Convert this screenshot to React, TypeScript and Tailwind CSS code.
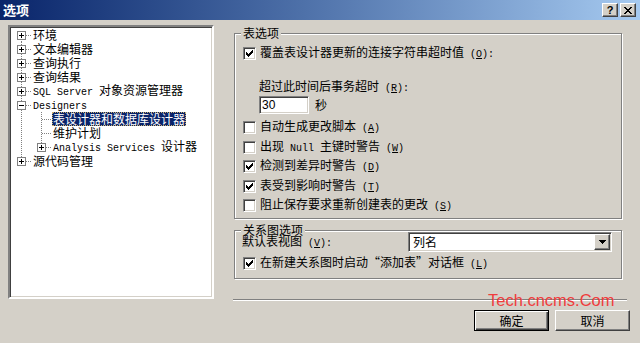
import React from "react";

const MONO = "font-['Liberation_Mono',monospace] text-[10px] whitespace-pre";

function M({ t }: { t: string }) {
  const parts = t.split(/([\x20-\x7E]+)/);
  return (
    <>
      {parts.map((p, i) =>
        p === "" ? null : /^[\x20-\x7E]+$/.test(p) ? (
          <span key={i} className={MONO}>
            {p}
          </span>
        ) : (
          <span key={i}>{p}</span>
        )
      )}
    </>
  );
}

function L({ pre, k, post = "" }: { pre: string; k: string; post?: string }) {
  return (
    <span className="whitespace-nowrap">
      <M t={pre} />
      <span className={MONO}>
        (<span className="underline">{k}</span>)
      </span>
      <M t={post} />
    </span>
  );
}

const CHECK_PX: [number, number][] = [
  [6, 0],
  [5, 1], [6, 1],
  [0, 2], [4, 2], [5, 2], [6, 2],
  [0, 3], [1, 3], [3, 3], [4, 3], [5, 3],
  [0, 4], [1, 4], [2, 4], [3, 4], [4, 4],
  [1, 5], [2, 5], [3, 5],
  [2, 6],
];

function Check({ on }: { on?: boolean }) {
  return (
    <span className="w-[13px] h-[13px] shrink-0 bg-white border border-t-[#808080] border-l-[#808080] border-b-white border-r-white shadow-[inset_1px_1px_0_#404040,inset_-1px_-1px_0_#d4d0c8] flex items-center justify-center">
      {on && (
        <svg width="7" height="7" viewBox="0 0 7 7" shapeRendering="crispEdges">
          {CHECK_PX.map(([x, y], i) => (
            <rect key={i} x={x} y={y} width="1" height="1" fill="#000" />
          ))}
        </svg>
      )}
    </span>
  );
}

function CheckRow({ on, children, h = "h-[19.5px]" }: { on?: boolean; children: React.ReactNode; h?: string }) {
  return (
    <div className={`flex items-center gap-[4px] ${h}`}>
      <Check on={on} />
      <span className="leading-[14px]">{children}</span>
    </div>
  );
}

type Row = {
  t: string;
  l: number;
  box?: "+" | "-";
  sel?: boolean;
  v: [number, number, number][];
  hx: number;
};

const rows: Row[] = [
  { t: "环境", l: 0, box: "+", v: [[11, 7, 14]], hx: 11 },
  { t: "文本编辑器", l: 0, box: "+", v: [[11, 0, 14]], hx: 11 },
  { t: "查询执行", l: 0, box: "+", v: [[11, 0, 14]], hx: 11 },
  { t: "查询结果", l: 0, box: "+", v: [[11, 0, 14]], hx: 11 },
  { t: "SQL Server 对象资源管理器", l: 0, box: "+", v: [[11, 0, 14]], hx: 11 },
  { t: "Designers", l: 0, box: "-", v: [[11, 0, 14]], hx: 11 },
  { t: "表设计器和数据库设计器", l: 1, sel: true, v: [[11, 0, 14], [31, 0, 14]], hx: 31 },
  { t: "维护计划", l: 1, v: [[11, 0, 14], [31, 0, 14]], hx: 31 },
  { t: "Analysis Services 设计器", l: 1, box: "+", v: [[11, 0, 14], [31, 0, 7]], hx: 31 },
  { t: "源代码管理", l: 0, box: "+", v: [[11, 0, 7]], hx: 11 },
];

function Gutter({ r }: { r: Row }) {
  const w = 22 + 20 * r.l;
  const hx = r.hx;
  return (
    <svg width={w} height="14" viewBox={`0 0 ${w} 14`} shapeRendering="crispEdges" className="shrink-0">
      {r.v.map(([x, a, b], i) => (
        <line key={i} x1={x + 0.5} x2={x + 0.5} y1={a} y2={b} stroke="#808080" strokeDasharray="1 1" />
      ))}
      <line x1={hx + 1} x2={hx + 11} y1={7.5} y2={7.5} stroke="#808080" strokeDasharray="1 1" />
      {r.box && (
        <>
          <rect x={hx - 4 + 0.5} y={3.5} width={8} height={8} fill="#fff" stroke="#808080" />
          <line x1={hx - 2} x2={hx + 3} y1={7.5} y2={7.5} stroke="#000" />
          {r.box === "+" && <line x1={hx + 0.5} x2={hx + 0.5} y1={5} y2={10} stroke="#000" />}
        </>
      )}
    </svg>
  );
}

function Raised({ children, className = "" }: { children: React.ReactNode; className?: string }) {
  return (
    <div
      className={`bg-[#d4d0c8] border border-t-white border-l-white border-b-[#404040] border-r-[#404040] shadow-[inset_-1px_-1px_0_#808080] flex items-center justify-center ${className}`}
    >
      {children}
    </div>
  );
}

export default function App() {
  return (
    <div className="relative w-[640px] h-[343px] overflow-hidden bg-[#d4d0c8] text-black text-[12px] leading-[14px] font-['Noto_Sans_CJK_SC','Noto_Sans',sans-serif]">
      {/* Title bar */}
      <div className="h-[20px] flex items-center pl-[3px] pr-[4px] bg-linear-to-r from-[#0a246a] to-[#a6caf0]">
        <span className="text-white font-bold text-[13px] leading-[16px]">选项</span>
        <div className="ml-auto flex gap-[2px]">
          <Raised className="w-[16px] h-[14px]">
            <span className="font-['Liberation_Sans',sans-serif] font-bold text-[11px] leading-[11px]">?</span>
          </Raised>
          <Raised className="w-[16px] h-[14px]">
            <svg width="8" height="7" viewBox="0 0 8 7" shapeRendering="crispEdges">
              <path d="M0 0h2v1H0zM6 0h2v1H6zM1 1h2v1H1zM5 1h2v1H5zM2 2h4v1H2zM3 3h2v1H3zM2 4h4v1H2zM1 5h2v1H1zM5 5h2v1H5zM0 6h2v1H0zM6 6h2v1H6z" fill="#000" />
            </svg>
          </Raised>
        </div>
      </div>

      {/* Body */}
      <div className="flex pt-[5px]">
        {/* Tree */}
        <div className="ml-[8px] w-[206px] h-[274px] bg-white border-2 border-t-[#808080] border-l-[#808080] border-b-white border-r-white shadow-[inset_1px_1px_0_#404040,inset_-1px_-1px_0_#d4d0c8] pt-[1px]">
          {rows.map((r, i) => (
            <div key={i} className="flex items-center h-[14px] whitespace-nowrap">
              <Gutter r={r} />
              {r.sel ? (
                <span className="px-[1px] bg-[#0a246a] text-white outline outline-1 outline-dotted outline-[#c8b070] -outline-offset-1">
                  <M t={r.t} />
                </span>
              ) : (
                <span className="px-[1px]">
                  <M t={r.t} />
                </span>
              )}
            </div>
          ))}
        </div>

        {/* Right column */}
        <div className="ml-[20px] w-[396px] flex flex-col">
          {/* Group 1 */}
          <div className="mt-[8px] w-[388px] border border-[#808080] shadow-[1px_1px_0_#fff,inset_1px_1px_0_#fff] pb-[2.5px]">
            <div className="-mt-[8px] ml-[6px] px-[2px] w-fit h-[14px] bg-[#d4d0c8]">表选项</div>
            <div className="pl-[8px]">
              <div className="mt-[3px]">
                <CheckRow on h="h-[20px]">
                  <L pre="覆盖表设计器更新的连接字符串超时值 " k="O" post=":" />
                </CheckRow>
              </div>
              <div className="mt-[16px] pl-[16px] h-[14px]">
                <L pre="超过此时间后事务超时 " k="R" post=":" />
              </div>
              <div className="mt-[3px] pl-[16px] flex items-center">
                <div className="w-[50px] h-[18px] bg-white border border-t-[#808080] border-l-[#808080] border-b-white border-r-white shadow-[inset_1px_1px_0_#404040,inset_-1px_-1px_0_#d4d0c8] flex items-center pl-[2px] font-['Liberation_Sans',sans-serif] text-[12px]">
                  30
                </div>
                <span className="ml-[6px]">秒</span>
              </div>
              <div className="mt-[4px]">
                <CheckRow>
                  <L pre="自动生成更改脚本 " k="A" />
                </CheckRow>
                <CheckRow>
                  <L pre="出现 Null 主键时警告 " k="W" />
                </CheckRow>
                <CheckRow on>
                  <L pre="检测到差异时警告 " k="D" />
                </CheckRow>
                <CheckRow on>
                  <L pre="表受到影响时警告 " k="T" />
                </CheckRow>
                <CheckRow>
                  <L pre="阻止保存要求重新创建表的更改 " k="S" />
                </CheckRow>
              </div>
            </div>
          </div>

          {/* Group 2 */}
          <div className="mt-[11px] w-[388px] border border-[#808080] shadow-[1px_1px_0_#fff,inset_1px_1px_0_#fff] pb-[5px]">
            <div className="-mt-[8px] ml-[6px] px-[2px] w-fit h-[14px] bg-[#d4d0c8]">关系图选项</div>
            <div className="-mt-[5px] h-[20px] flex items-center justify-between pl-[7px] pr-[9px]">
              <L pre="默认表视图 " k="V" post=":" />
              <div className="w-[204px] h-[20px] bg-white border border-t-[#808080] border-l-[#808080] border-b-white border-r-white shadow-[inset_1px_1px_0_#404040,inset_-1px_-1px_0_#d4d0c8] p-[1px] flex items-stretch">
                <span className="flex-1 flex items-center pl-[3px]">列名</span>
                <Raised className="w-[16px]">
                  <svg width="7" height="4" viewBox="0 0 7 4" shapeRendering="crispEdges">
                    <path d="M0 0h7v1H0zM1 1h5v1H1zM2 2h3v1H2zM3 3h1v1H3z" fill="#000" />
                  </svg>
                </Raised>
              </div>
            </div>
            <div className="mt-[1px] pl-[8px]">
              <CheckRow on h="h-[20px]">
                <M t="在新建关系图时启动“添加表”对话框 " />
                <span className={MONO}>
                  (<span className="underline">L</span>)
                </span>
              </CheckRow>
            </div>
          </div>

          {/* Separator */}
          <div className="mt-[20px] -ml-[1px] w-[394px] h-[2px] border-t border-t-[#808080] border-b border-b-white" />

          {/* Buttons */}
          <div className="mt-[9px] flex justify-end gap-[6px]">
            <div className="w-[75px] h-[21px] border border-black bg-[#d4d0c8] shadow-[inset_1px_1px_0_#fff,inset_-1px_-1px_0_#404040,inset_-2px_-2px_0_#808080] flex items-center justify-center">
              确定
            </div>
            <Raised className="w-[75px] h-[21px]">取消</Raised>
          </div>
        </div>
      </div>

      {/* Watermark */}
      <div className="absolute left-[488px] top-[292px] font-['Liberation_Sans',sans-serif] text-[16.5px] leading-none text-[#f03c3c] whitespace-nowrap">
        Tech.cncms.Com
      </div>
    </div>
  );
}
